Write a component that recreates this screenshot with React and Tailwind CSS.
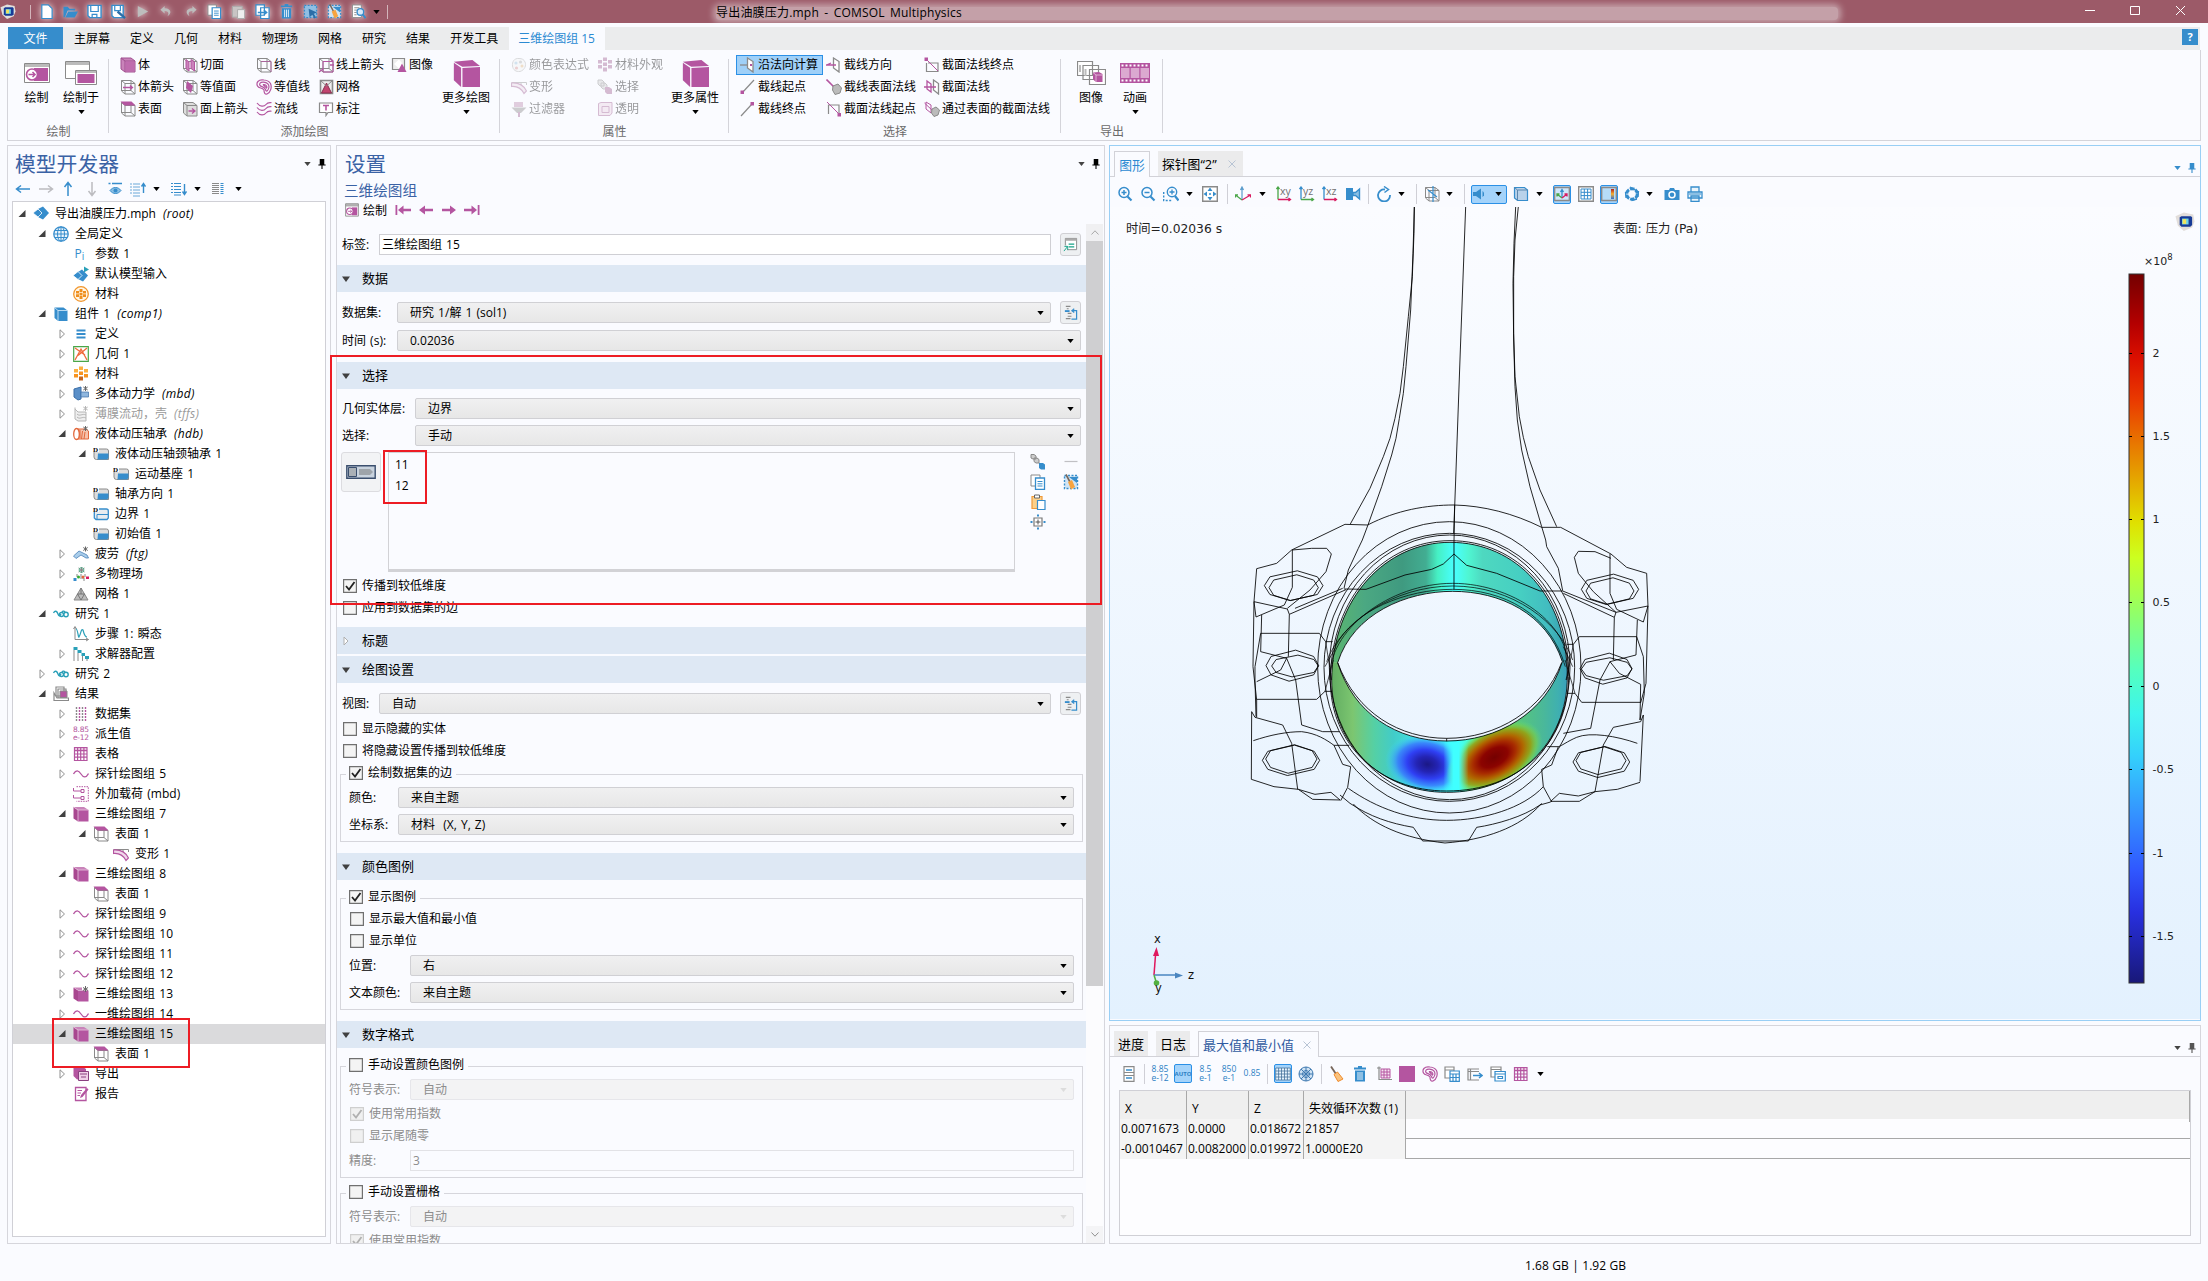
import React from "react";

const P = "#b455a0";
const B = "#368dcc";
const G = "#8a8a8a";
const T = "#2aa0b8";

const cubeFrame = (
  <g fill="none" stroke={G}>
    <path d="M1.5 1.5H11L15 4.5V15H5L1.5 12ZM1.5 1.5L5 4.5H15M5 4.5V15M11 1.5V11.5L15 15M11 11.5H1.5" />
  </g>
);

const ICONS = {
  cubeSolid: (
    <>
      <path d="M0.5 1H11L15.5 4H5Z" fill="#c983ba" />
      <path d="M0.5 1L5 4V15.5L0.5 12.5Z" fill="#a8478f" />
      <path d="M5 4H15.500V15.500H5Z" fill={P} />
      <path d="M0.500 1L5 4V15.500M5 4H15.500" fill="none" stroke="#e9c6e0" strokeWidth="0.8" />
    </>
  ),
  cubeStar: (
    <>
      <path d="M0.5 1.500L5 4.500V15.500L0.500 12.500Z" fill="#a8478f" />
      <path d="M5 4.500H15.500V15.500H5Z" fill={P} />
      <path d="M0.500 1.500H9V4H5Z" fill="#c983ba" />
      <path d="M12.500 0V6M10 1.500L15 4.500M15 1.500L10 4.500" stroke="#666" fill="none" />
    </>
  ),
  cubeBlue: (
    <>
      <path d="M1.500 1.500H10.500L14.500 4.500V15H5L1.500 12Z" fill={B} />
      <path d="M1.500 1.500L5 4.500H14.500M5 4.500V15" fill="none" stroke="#d8ecfa" strokeWidth="0.8" />
    </>
  ),
  cubeLight: (
    <>
      <path d="M1 1H11L15 4V15H5L1 12Z" fill="#c983ba" stroke="#a05090" />
      <path d="M1 1L5 4H15M5 4V15" fill="none" stroke="#a05090" />
      <path d="M5.500 4.500H14.500V14.500H5.500Z" fill="#bf6cae" />
    </>
  ),
  cubeBig: (
    <>
      <path d="M0.500 1L11.500 0L16 3.500L5.500 4Z" fill={P} />
      <path d="M0.500 1.600L4.800 4.600V16L0.500 12Z" fill={P} />
      <path d="M5.600 4.700L16 4.200V16H5.600Z" fill={P} />
    </>
  ),
  surface: (
    <>
      {cubeFrame}
      <path d="M0.500 0.500H11.500L15.500 4.500H4.500Z" fill={P} />
    </>
  ),
  volArrow: (
    <>
      {cubeFrame}
      <path d="M3 8.500H12M10 6.500L12.500 8.500L10 10.500" stroke={P} fill="none" strokeWidth="1.3" />
    </>
  ),
  slice: (
    <>
      {cubeFrame}
      <path d="M4 2.500L7 5V14L4 11.500ZM9 2.500L12.500 5V14L9 11.500Z" fill="#c983ba" stroke={P} />
    </>
  ),
  iso: (
    <>
      {cubeFrame}
      <path d="M5 2L11 7L9 14L4 9Z" fill={P} />
    </>
  ),
  surfArrow: (
    <>
      <path d="M1.500 1.500H11L15 4.500V15H5L1.500 12Z" fill="#ddd" stroke={G} />
      <path d="M1.500 1.500L5 4.500H15M5 4.500V15" fill="none" stroke={G} />
      <path d="M6.500 10H12M10 7.500L13 10L10 12.500" stroke={P} fill="none" strokeWidth="1.300" />
    </>
  ),
  lineCube: (
    <>
      {cubeFrame}
      <path d="M5 4.500H15V15" stroke={P} fill="none" strokeWidth="0.700" />
    </>
  ),
  contour: (
    <g fill="none" stroke={P} strokeWidth="1.200">
      <path d="M8 1C2 0 0 4 1.500 7C3 10 6 8 8 11C8 14 9 15.500 11 15C15 13 16 8 14.500 4.500C13 2 11 1.300 8 1Z" />
      <path d="M7.500 3.200C4 3 3 5 4 6.500C5.500 8 8 7.500 9.500 10.500C10.500 14 12.500 11 13 8C13 4.500 10.500 3.500 7.500 3.200Z" />
      <path d="M8 5.500C6 5.500 8.500 6.500 10.500 9C11.500 8 10.500 5.800 8 5.500Z" />
    </g>
  ),
  stream: (
    <g fill="none" stroke={P} strokeWidth="1.200">
      <path d="M1 2C4 6 8 6 10 3.500S14 2 15.500 1.500M1 6.500C4 10.500 8 10 10 7.500S14 6 15.500 5.500M1 11C4 15 8 14.500 10 12S14 10.500 15.500 10" />
    </g>
  ),
  lineArrow: (
    <>
      {cubeFrame}
      <path d="M5 4.500H15V15H5Z" stroke={P} fill="none" />
      <path d="M12 1L15.500 4.500M12 8H16M5 12L1 15" stroke={P} fill="none" strokeWidth="1.300" />
    </>
  ),
  meshTri: (
    <>
      <path d="M2.500 1.500H14.500V14.500H2.500Z" fill="#eee" stroke={G} strokeWidth="1.600" />
      <path d="M8.500 4L13.500 14H3.500Z" fill="#c2456f" stroke="#8a3050" />
      <path d="M2.500 1.500L8.500 7L14.500 1.500" fill="none" stroke={G} />
    </>
  ),
  note: (
    <>
      <path d="M1.500 2H14.500V11.500H10L8 14.500V11.500H1.500Z" fill="#fff" stroke={G} strokeWidth="1.200" />
      <path d="M5 4.500H11M8 4.500V9.500" stroke={P} strokeWidth="1.600" fill="none" />
    </>
  ),
  image: (
    <>
      <path d="M1.500 1.500H13.500V12.500H1.500Z" fill="#eee" stroke={G} strokeWidth="1.200" />
      <path d="M3 7L8 2.500L12.500 8L8 11.500Z" fill="#fff" />
      <path d="M11 6.500L15.500 15H6.500Z" fill={P} />
    </>
  ),
  palette: (
    <>
      <path d="M8 1.500C3 1 1 5 1.500 9C2 13 5 15 9 14.500C14 13 15.500 8 14 5C13 2.500 11 1.500 8 1.500Z" fill="#f2f2f2" stroke="#aaa" />
      <circle cx="5" cy="6" r="1.600" fill="#8bc4ea" />
      <circle cx="9.500" cy="5" r="1.600" fill="#aaa" />
      <circle cx="5.500" cy="11" r="1.600" fill="#e88" />
      <circle cx="11" cy="9" r="1.500" fill="#f2b25a" />
    </>
  ),
  deform: (
    <g fill="none" stroke={P}>
      <path d="M0.500 3.500H15.500V6M10 3.500V7" stroke={G} />
      <path d="M0.500 4V7.500C6 7 10 9 13 14.500L15.500 12C13 7 8 3.500 0.500 4Z" fill="#f0d6ea" strokeWidth="1.200" />
    </g>
  ),
  filter: (
    <>
      <path d="M3 1H12V6H3Z" fill="#c983ba" />
      <path d="M0.500 6.500H15.500L10 12H6Z" fill="#888" />
      <path d="M7 11H9V16H7Z" fill={P} />
    </>
  ),
  matGrid: (
    <g fill={P}>
      <path d="M6 0.500H10V4H6ZM1 3H5V6.500H1ZM11 3H15V6.500H11ZM6 5.500H10V9H6ZM1 8H5V11.500H1ZM11 8H15V11.500H11ZM6 10.500H10V14.500H6Z" />
    </g>
  ),
  cubes: (
    <>
      <path d="M1 1H5L7 3V7H3L1 5ZM4 4H8L10 6V10H6L4 8Z" fill="#ccc" stroke={G} />
      <path d="M8 8H12L15 10V15H10L8 13Z" fill={P} />
    </>
  ),
  cubesBlue: (
    <>
      <path d="M1 0.500H4L6 2V5H3L1 4ZM4 4H7L9 5.500V9H6L4 7.500Z" fill="#ccc" stroke={G} />
      <path d="M9 9H13L15 10.500V15.500H11L9 14Z" fill={B} />
    </>
  ),
  transp: (
    <>
      <path d="M1.500 2.500L4 1.500H15V12L13 14.500H1.500Z" fill="#f0d0e8" stroke={P} />
      <path d="M5 5.500H12V11.500H5Z" fill="none" stroke={P} />
    </>
  ),
  cutPlane: (
    <g fill="none" stroke={G} strokeWidth="1.300">
      <path d="M0 8H8" />
      <path d="M7.500 1L13 4.500V15L7.500 11Z" fill="#fff" />
      <path d="M10 8H12" stroke={P} strokeWidth="2" />
    </g>
  ),
  cutPlaneDir: (
    <g fill="none" stroke={G} strokeWidth="1.300">
      <path d="M7.500 1L13 4.500V15L7.500 11Z" fill="#fff" />
      <path d="M0 8H10M5 6L0.500 8" stroke={P} />
    </g>
  ),
  cutPlaneNorm: (
    <g fill="none" stroke={G} strokeWidth="1.300">
      <path d="M9.500 1L14.500 4.500V15L9.500 11Z" fill="#fff" />
      <path d="M3 2L7 5V13L3 10Z M0 8H12" stroke={P} />
    </g>
  ),
  lineStart: (
    <>
      <path d="M2 14L14 1" stroke={G} strokeWidth="1.200" />
      <path d="M0.500 11.500H4V15H0.500Z" fill={P} />
    </>
  ),
  lineEnd: (
    <>
      <path d="M1 15L12 3" stroke={G} strokeWidth="1.200" />
      <path d="M10.500 1H14V4.500H10.500Z" fill={P} />
    </>
  ),
  surfNormal: (
    <>
      <path d="M0.500 0.500L9 9" stroke={P} strokeWidth="1.600" />
      <path d="M7 7L12 5L15.500 9L14 14L9 15.500L6.500 11Z" fill="#bbb" stroke={G} />
    </>
  ),
  planeNormEnd: (
    <>
      <path d="M4 6H14V14.500H2.500V6" fill="none" stroke={G} strokeWidth="1.200" />
      <path d="M3 3L14 14" stroke={P} />
      <path d="M0.500 0.500H4V4H0.500Z" fill={P} />
    </>
  ),
  planeNormStart: (
    <>
      <path d="M2.500 13V4H13V12" fill="none" stroke={G} strokeWidth="1.200" />
      <path d="M1 1L13 13" stroke={P} />
      <path d="M11.500 12H15V15.500H11.500Z" fill={P} />
    </>
  ),
  planeSurf: (
    <>
      <path d="M2 1L7 4V12L2 8ZM0.500 2L10 11" fill="none" stroke={P} />
      <path d="M8 8L12 6L15.500 9L14 14L10 15.500L7.500 12Z" fill="#bbb" stroke={G} />
    </>
  ),
  plotWin: (
    <>
      <path d="M0.700 1H15.300V15H0.700Z" fill="#fff" stroke={G} strokeWidth="1" />
      <path d="M0.700 1H15.300V3.500H0.700Z" fill="#bbb" stroke={G} strokeWidth="0.600" />
      <path d="M8 5H14V14H8Z" fill={P} />
      <circle cx="5.500" cy="9.500" r="3.700" fill="#fff" stroke={P} strokeWidth="1.200" />
      <path d="M3.500 9.500H7.500M6 8L7.700 9.500L6 11" fill="none" stroke={P} strokeWidth="1" />
    </>
  ),
  root: (
    <>
      <path d="M5 3L10 0.500L16 7L10 13.500L5 11Z" fill={B} />
      <path d="M0 7L5 3L9 7L5 11Z" fill={B} stroke="#fff" strokeWidth="0.800" />
    </>
  ),
  modelIn: (
    <>
      <path d="M5 6L9 3.500L15 9.500L10 15.500L5 13Z" fill={B} />
      <path d="M0 9.500L5 5.500L9 9.500L5 13.500Z" fill={B} stroke="#fff" strokeWidth="0.800" />
      <path d="M11 0.500L16 3.500L11 6.500Z" fill={T} />
    </>
  ),
  globe: (
    <g fill="none" stroke={B}>
      <circle cx="8" cy="8" r="7.200" fill="#eaf4fb" strokeWidth="1.300" />
      <ellipse cx="8" cy="8" rx="3.500" ry="7.200" />
      <path d="M1 8H15M8 1V15M2 4.500H14M2 11.500H14" />
    </g>
  ),
  pi: (
    <text x="1.500" y="12" fontSize="12" fill={B} className="font-['Open_Sans']">
      P<tspan fontSize="10" dy="2">i</tspan>
    </text>
  ),
  matRing: (
    <>
      <circle cx="8" cy="8" r="7.300" fill="#fff6e6" stroke="#f2962c" strokeWidth="1.300" />
      <path d="M6.500 3H9.500V6H6.500ZM3 5H6V7.500H3ZM10 5H13V7.500H10ZM6.500 6.700H9.500V9.500H6.500ZM3 8.300H6V11H3ZM10 8.300H13V11H10ZM6.500 10H9.500V13H6.500Z" fill="#ef8f1e" />
    </>
  ),
  matColor: (
    <>
      <path d="M6 0.500H10V4H6ZM1 3H5V6.500H1ZM11 3H15V6.500H11Z" fill="#fbb040" />
      <path d="M6 5.500H10V9H6ZM1 8H5V11.500H1ZM11 8H15V11.500H11Z" fill="#f7931e" />
      <path d="M6 10.500H10V14.500H6Z" fill="#c8661a" />
    </>
  ),
  lines3: <path d="M3.500 4.500H12.500M3.500 8H12.500M3.500 11.500H12.500" stroke={B} strokeWidth="2" />,
  geom: (
    <>
      <path d="M0.700 0.700H15.300V15.300H0.700Z" fill="#fff" stroke="#4aa648" strokeWidth="1.200" />
      <path d="M2 2L12 9M2 14L8 3L14 14M14 2L5 9.500" fill="none" stroke="#f0693a" strokeWidth="1.300" />
    </>
  ),
  multibody: (
    <>
      <path d="M1 3L8 1V13L5 14L1 11Z" fill="#5a8fc8" stroke="#3c6fa8" />
      <path d="M8 6H15.500V11H8Z" fill="#8fb6de" stroke="#3c6fa8" strokeWidth="0.700" />
      <path d="M12.500 0V5M10.300 1L14.700 4M14.700 1L10.300 4" stroke="#666" fill="none" />
    </>
  ),
  thinFilm: (
    <g stroke="#b5b5b5" fill="none">
      <path d="M2 1.500V13L5 15H13V6H5L2 3" fill="#eee" />
      <path d="M4 8C7 11 9 7 13 9M4 11C7 14 9 10 13 12" />
      <path d="M12.500 0V5M10.300 1L14.700 4M14.700 1L10.300 4" />
    </g>
  ),
  bearing: (
    <>
      <path d="M3 3H13L15.500 5V13H3Z" fill="#f6c2ac" stroke="#e2683c" />
      <ellipse cx="3.500" cy="8" rx="2.800" ry="5.500" fill="#fff" stroke="#e2683c" strokeWidth="1.300" />
      <path d="M7 4V12M9.500 5L8.500 13M12 6L11 13" stroke="#e2683c" />
      <path d="M12.500 0V5M10.300 1L14.700 4M14.700 1L10.300 4" stroke="#666" fill="none" />
    </>
  ),
  domain: (
    <>
      <path d="M3.500 3H13.500Q15.500 3 15.500 5V13.500H3.500Q1 13.500 1 11V5Z" fill="#dcdcdc" stroke={G} />
      <path d="M5 7.500H15.500V12L14 13.500H4.500Z" fill={B} />
      <path d="M0 0H6V6H0Z" fill="#fff" />
      <text x="0" y="5.500" fontSize="7" fontWeight="bold" className="font-['Liberation_Serif']">D</text>
    </>
  ),
  boundary: (
    <>
      <path d="M3.500 3H13.500Q15.300 3 15.300 5V12L14 13.500H3L1.300 12V5Z" fill="#e8ecf0" stroke={B} strokeWidth="1.300" />
      <path d="M4 8.500H15M4 8.500V13" stroke={B} fill="none" />
      <path d="M0 0H6V6H0Z" fill="#fff" />
      <text x="0" y="5.500" fontSize="7" fontWeight="bold" className="font-['Liberation_Serif']">D</text>
    </>
  ),
  fatigue: (
    <>
      <path d="M0.500 10L6 5L14 9L15.500 12L13 12L8 9L3 12.500Z" fill="#a9cdea" stroke="#4a80b8" strokeWidth="0.800" />
      <path d="M12.500 0.500V5.500M10.300 1.500L14.700 4.500M14.700 1.500L10.300 4.500" stroke="#666" fill="none" />
    </>
  ),
  multiphys: (
    <>
      <path d="M8.500 1V7M5.500 2L11.500 6M11.500 2L5.500 6" stroke="#888" />
      <circle cx="8.500" cy="4" r="2.400" fill="none" stroke="#5a8" />
      <path d="M4 8V11M8 8V11M12 8V11M2 12V15M7 12H11V15" stroke="#888" fill="none" />
      <path d="M0.500 12H3.500V15H0.500Z" fill={B} />
      <circle cx="5.500" cy="11" r="1.500" fill="#3a3" />
      <circle cx="10" cy="11" r="1.500" fill="#e2683c" />
      <path d="M13 10.500H16V13H13Z" fill="#d81b60" />
    </>
  ),
  mesh: (
    <>
      <path d="M8 2L15 14H1Z" fill="#bbb" stroke={G} />
      <path d="M4.500 8H11.500L8 14ZM8 2V8" fill="none" stroke="#666" strokeWidth="0.800" />
    </>
  ),
  study: (
    <g fill="none" stroke={T} strokeWidth="1.400">
      <path d="M0.500 7C2 4 4 5 5 8S7 10 8 8" />
      <circle cx="8.500" cy="8.500" r="2" />
      <path d="M9 6C10 4.500 12 5 12 7" />
      <circle cx="13" cy="8.500" r="2.200" />
    </g>
  ),
  transient: (
    <>
      <path d="M2 1V13.500H15.500M0.500 3L2 0.500L3.500 3M13 12L15.500 13.500L13 15" fill="none" stroke={G} />
      <path d="M3 3C5 3 5 12 6 11C8 8 8 2 10 4C11 8 12 11 14 11" fill="none" stroke={T} strokeWidth="1.200" />
    </>
  ),
  solver: (
    <>
      <path d="M1 4V15M5 7V15M9.500 9V15M14 12V15" stroke={G} />
      <path d="M0.500 1H4.500V4H0.500ZM4.500 4H8.500V7H4.500ZM8.500 7H12V10H8.500ZM12 10H16V13H12Z" fill={T} />
    </>
  ),
  results: (
    <>
      <path d="M3 1H11V10H3ZM5 3H13V12H5Z" fill="#fff" stroke={G} strokeWidth="1.200" />
      <path d="M1 7V14.500H15.500V12H4Z" fill="#fff" stroke={G} strokeWidth="1.200" />
      <path d="M7 5H14V11.500H7Z" fill={P} stroke={G} />
    </>
  ),
  dataset: (
    <g strokeDasharray="2 1" strokeWidth="1.400" fill="none">
      <path d="M3.500 1V15M9.500 1V15" stroke={G} />
      <path d="M6.500 1V15M12.500 1V15" stroke={P} />
    </g>
  ),
  derived: (
    <g fill={P} fontSize="7.500" className="font-['DejaVu_Sans']">
      <text x="0" y="6" textLength="16">8.85</text>
      <text x="0" y="13.500" textLength="16">e-12</text>
    </g>
  ),
  table: (
    <>
      <path d="M1.500 1.500H14V5H1.500Z" fill="#e9c6e0" />
      <path d="M1.500 1.500H14V14.500H1.500ZM1.500 4.700H14M1.500 8H14M1.500 11.200H14M4.600 1.500V14.500M7.700 1.500V14.500M10.900 1.500V14.500" fill="none" stroke={P} strokeWidth="1.200" />
    </>
  ),
  wave: <path d="M0.500 8C3 3.500 5.500 4 8 8S13 12 15.500 7.500" fill="none" stroke={P} strokeWidth="1.300" />,
  appliedLoad: (
    <>
      <path d="M3.500 0.700H15.300V15.300H3.500" fill="none" stroke={P} strokeDasharray="1.500 1" />
      <path d="M0.500 2V5H8M0.500 9V12H8" fill="none" stroke={P} />
      <path d="M8 3.500H11V6.500H8ZM8 10.500H11V13.500H8Z" fill="#fff" stroke={P} />
    </>
  ),
  exportIc: (
    <>
      <path d="M0.500 1H10L13 3V12L4 13.500L0.500 10Z" fill={P} />
      <path d="M5.500 5.500H15.500V14.500H5.500Z" fill="#f0d0e8" stroke="#8a4080" />
      <path d="M7 8H14M8 11H13" stroke="#8a4080" />
    </>
  ),
  report: (
    <>
      <path d="M2.500 1.500H13V14.500H2.500Z" fill="#fff" stroke={P} strokeWidth="1.300" />
      <path d="M4.500 4.500H9M4.500 7H8M4.500 9.500H7" stroke={P} />
      <path d="M7 12L8 9L14 2L15.500 3.500L9.500 11Z" fill={P} />
    </>
  ),
  left: <path d="M15 8H2M6 4.500L1.500 8L6 11.500" fill="none" stroke={B} strokeWidth="1.500" />,
  rightGrey: <path d="M1 8H14M10 4.500L14.500 8L10 11.500" fill="none" stroke="#bcbcc0" strokeWidth="1.500" />,
  up: <path d="M8 15V2M4.500 6L8 1.500L11.500 6" fill="none" stroke={B} strokeWidth="1.500" />,
  downGrey: <path d="M8 1V14M4.500 10L8 14.500L11.500 10" fill="none" stroke="#bcbcc0" strokeWidth="1.500" />,
  eye: (
    <>
      <path d="M1.500 2.500H3.500M5 2.500H15" stroke={B} strokeWidth="1.600" />
      <path d="M3 9.500C6 5.500 11 5.500 14 9.500C11 13.500 6 13.500 3 9.500Z" fill="#8bbfe4" stroke={B} />
      <circle cx="8.500" cy="9.500" r="2" fill={B} />
    </>
  ),
  listUp: (
    <>
      <path d="M0 3H2M3 3H10M0 6H2M3 6H10M0 9H2M3 9H10M0 12H2M3 12H10M3 15H10" stroke="#6ba8d8" />
      <path d="M13.500 12V3M11.500 5.500L13.500 2.500L15.500 5.500" fill="none" stroke={B} strokeWidth="1.400" />
    </>
  ),
  listDown: (
    <>
      <path d="M0 2.500H2M3 2.500H10M0 5.500H2M3 5.500H10M0 8.500H2M3 8.500H10M0 11.500H2M3 11.500H10M3 14H10" stroke={B} />
      <path d="M13.500 3V13M11.500 10.500L13.500 13.500L15.500 10.500" fill="none" stroke={B} strokeWidth="1.400" />
    </>
  ),
  cols: (
    <>
      <path d="M2 2.500H9M2 4.500H9M2 6.500H9M2 8.500H9M2 10.500H9M2 12.500H9" stroke={G} />
      <path d="M10.500 2.500H13.500M10.500 4.500H13.500M10.500 6.500H13.500M10.500 8.500H13.500M10.500 10.500H13.500M10.500 12.500H13.500" stroke={B} />
    </>
  ),
  pFirst: (
    <>
      <path d="M0.500 3H2.300V13H0.500ZM7 6.800H16V9.200H7Z" fill={P} />
      <path d="M8.500 3.500L3 8L8.500 12.500Z" fill={P} />
    </>
  ),
  pPrev: <path d="M7 3.500L1 8L7 12.500V9.200H15V6.800H7Z" fill={P} />,
  pNext: <path d="M9 3.500L15 8L9 12.500V9.200H1V6.800H9Z" fill={P} />,
  pLast: <path d="M15.500 3H13.700V13H15.500ZM7.500 3.500L13 8L7.500 12.500V9.200H0V6.800H7.500Z" fill={P} />,
  rename: (
    <>
      <path d="M2.500 1.500H14.500V13.500H5M2.500 1.500V9" fill="#fff" stroke={G} />
      <path d="M2.500 1.500H14.500V4H2.500Z" fill="#aaa" />
      <path d="M6 7.500H12M6 10.500H12" stroke="#18a388" strokeWidth="1.400" />
      <path d="M5 10H1.500M5 10V14M5 10L1 15" stroke="#18a388" fill="none" />
    </>
  ),
  goTo: (
    <>
      <path d="M3 1.500H8M4 4H6M5 9H9M5 12H9M3 14.500H8" stroke={G} strokeWidth="1.300" />
      <path d="M2 6.500H7" stroke={B} strokeWidth="2" />
      <path d="M9 15H14.500V6H10M12 4L9.500 6L12 8" fill="none" stroke={B} strokeWidth="1.300" />
    </>
  ),
  file: <path d="M3 1H10L14 5V15.500H3Z" fill="#fff" stroke={B} strokeWidth="1.300" />,
  open: <path d="M0.500 3H5L7 5H13V7H5L2 14H0.500ZM5.500 8H16L12.500 14.500H2.500Z" fill={B} />,
  save: (
    <>
      <path d="M1 1.500H15V14.500H3L1 12.500Z" fill="#fff" stroke={B} strokeWidth="1.500" />
      <path d="M4 2V8H12V2M5.500 14V11H10.500V14" fill="none" stroke={B} strokeWidth="1.300" />
    </>
  ),
  saveAs: (
    <>
      <path d="M1 1.500H13V14.500H3L1 12.500Z" fill="#fff" stroke={B} strokeWidth="1.500" />
      <path d="M4 2V7H10V2" fill="none" stroke={B} strokeWidth="1.300" />
      <path d="M7 8L15 15" stroke="#2b6ea8" strokeWidth="2.500" />
    </>
  ),
  play: <path d="M3 2L14 8L3 14Z" fill="#bdbdbd" />,
  undo: <path d="M6 2L1.500 6L6 10V7.500C10 7.500 11 10 9 13C14 10 13 4.500 6 4.500Z" fill="#bdbdbd" />,
  redo: <path d="M10 2L14.500 6L10 10V7.500C6 7.500 5 10 7 13C2 10 3 4.500 10 4.500Z" fill="#bdbdbd" />,
  copy: (
    <>
      <path d="M1 1H10V12H1Z" fill="#fff" stroke={G} />
      <path d="M5.500 4H14.500V15.500H5.500Z" fill="#fff" stroke={B} strokeWidth="1.300" />
      <path d="M7.500 7.500H12.500M7.500 9.800H12.500M7.500 12H12.500" stroke={B} />
    </>
  ),
  pasteGrey: (
    <>
      <path d="M1.500 2.500H12V14H1.500Z" fill="#c8c4c4" stroke="#aaa" />
      <path d="M7 6H14.500V15.500H7Z" fill="#eee" stroke="#aaa" />
    </>
  ),
  paste: (
    <>
      <path d="M2 2.500H12V14.500H2Z" fill="#fbd08a" stroke="#ef9a3a" strokeWidth="1.200" />
      <path d="M4.500 1H9.500V4H4.500Z" fill="#fff" stroke="#666" />
      <path d="M7.500 6.500H15V15.500H7.500Z" fill="#fff" stroke={B} strokeWidth="1.200" />
    </>
  ),
  dup: (
    <>
      <path d="M1 1H10V12H1ZM6 4H15V15.500H6Z" fill="#fff" stroke={B} strokeWidth="1.300" />
      <path d="M3 9H12M9.500 6.500L12.500 9L9.500 11.500" fill="none" stroke={B} strokeWidth="1.500" />
    </>
  ),
  trash: (
    <>
      <path d="M2 2.500H14M6 1H10" stroke={B} strokeWidth="1.800" />
      <path d="M3 4.500H13V15.500H3Z" fill={B} />
      <path d="M6 6V14M8 6V14M10 6V14" stroke="#e6f2fb" />
    </>
  ),
  select: (
    <>
      <path d="M1.500 1.500H14.500V14.500H1.500Z" fill="#8fbfe4" stroke={B} strokeDasharray="2 1.500" strokeWidth="1.400" />
      <path d="M6 5L15 9L11.500 10.500L14 14.500L12 15.500L10 11.500L7 14Z" fill="#2b6ea8" />
    </>
  ),
  broomSel: (
    <>
      <path d="M1.500 1.500H14.500V14.500H1.500Z" fill="#cfe4f5" stroke={B} strokeDasharray="2 1.500" strokeWidth="1.400" />
      <path d="M6 3H14V9Z" fill={B} />
      <path d="M3 0.500L7 8" stroke="#77665a" strokeWidth="1.600" />
      <path d="M5 8L9 6L12 13L8 15.500Z" fill="#f7a440" />
    </>
  ),
  broom: (
    <>
      <path d="M2 0.500L7 8" stroke="#77665a" strokeWidth="1.800" />
      <path d="M5 8.500L8.500 6L14 13L9 15.500Z" fill="#f9c27e" stroke="#f08a2a" />
    </>
  ),
  search: (
    <>
      <path d="M1.500 1H11V14.500H1.500Z" fill="#fff" stroke={G} />
      <path d="M3.500 4H9M3.500 6.500H7M3.500 9H6M3.500 11.500H6" stroke={G} />
      <circle cx="10" cy="8.500" r="3.500" fill="#d6eafa" stroke={B} strokeWidth="1.400" />
      <path d="M12.500 11L15.500 15" stroke={B} strokeWidth="2" />
    </>
  ),
  comsol: (
    <>
      <path d="M0 3.500L7 0.500L15 2L16 8L14 13L7 16L2 11.500Z" fill="#e2dedb" />
      <path d="M3.500 4.500L5 3.500H13L14 4.500V11L12.500 12.500H5L3.500 11Z" fill="#173a96" />
      <path d="M5.500 5.500H11V10.500H5.500Z" fill="#6fd3e8" />
      <path d="M6 6H9V10H6Z" fill="#f2e35c" />
    </>
  ),
  zoomIn: (
    <g fill="none" stroke={B}>
      <circle cx="7" cy="6.500" r="5" strokeWidth="1.500" />
      <path d="M4.500 6.500H9.500M7 4V9" strokeWidth="1.500" />
      <path d="M10.500 10.500L14.500 14.500" strokeWidth="2.200" />
    </g>
  ),
  zoomOut: (
    <g fill="none" stroke={B}>
      <circle cx="7" cy="6.500" r="5" strokeWidth="1.500" />
      <path d="M4.500 6.500H9.500" strokeWidth="1.500" />
      <path d="M10.500 10.500L14.500 14.500" strokeWidth="2.200" />
    </g>
  ),
  zoomBox: (
    <g fill="none" stroke={B}>
      <path d="M0.700 6V14.500H9" strokeDasharray="2 1.500" strokeWidth="1.400" />
      <circle cx="9" cy="6" r="4.700" strokeWidth="1.400" />
      <path d="M6.500 6H11.500M9 3.500V8.500" strokeWidth="1.300" />
      <path d="M12 10L15.500 14.500" strokeWidth="2.200" />
    </g>
  ),
  fit: (
    <>
      <path d="M0.700 0.700H15.300V15.300H0.700Z" fill="#fff" stroke={G} strokeWidth="1.400" />
      <path d="M8 1.500L10.500 5H5.500ZM8 14.500L10.500 11H5.500ZM1.500 8L5 5.500V10.500ZM14.500 8L11 5.500V10.500Z" fill={B} />
      <path d="M7 8H9M8 7V9" stroke={B} />
    </>
  ),
  axes: (
    <g fill="none" strokeWidth="1.200">
      <path d="M7 14V1.500M5.500 4L7 1L8.500 4" stroke="#5a9ccc" />
      <path d="M7 14L0.500 9M0.500 11.500V8.800H3" stroke="#4aa648" />
      <path d="M7 14L15.500 9M12.500 8.800H15.500V11.500" stroke="#d81b60" />
    </g>
  ),
  xy: (
    <g fill="none" strokeWidth="1.300">
      <path d="M2 13.500V1M0.500 3L2 1L3.500 3" stroke="#4aa648" />
      <path d="M2 13.500H14.500M12.500 12L14.500 13.500L12.500 15" stroke="#d81b60" />
      <text x="4" y="9" fontSize="10.500" fill="#707070" stroke="none">xy</text>
    </g>
  ),
  yz: (
    <g fill="none" strokeWidth="1.300">
      <path d="M2 13.500V1M0.500 3L2 1L3.500 3" stroke={B} />
      <path d="M2 13.500H14.500M12.500 12L14.500 13.500L12.500 15" stroke="#4aa648" />
      <text x="4" y="9" fontSize="10.500" fill="#707070" stroke="none">yz</text>
    </g>
  ),
  xz: (
    <g fill="none" strokeWidth="1.300">
      <path d="M2 13.500V1M0.500 3L2 1L3.500 3" stroke={B} />
      <path d="M2 13.500H14.500M12.500 12L14.500 13.500L12.500 15" stroke="#d81b60" />
      <text x="4" y="9" fontSize="10.500" fill="#707070" stroke="none">xz</text>
    </g>
  ),
  mirror: (
    <>
      <path d="M1 2H8V14H1Z" fill={B} />
      <path d="M8 6.500H10.500L14.500 3V13L10.500 9.500H8Z" fill="#8bbfe4" stroke={B} strokeWidth="1.400" />
    </>
  ),
  rotate: (
    <g fill="none" stroke={B} strokeWidth="1.800">
      <path d="M14 9A6 6 0 1 1 9 3.500" />
      <path d="M8 0.500L12.500 3.500L8.500 6.500" strokeWidth="1.500" />
    </g>
  ),
  clip: (
    <>
      {cubeFrame}
      <path d="M9 0V16M4 4L13 11" stroke={B} fill="none" strokeWidth="1.200" />
    </>
  ),
  light: (
    <>
      <path d="M1 6H4L9 2.500V13.500L4 10H1Z" fill={B} />
      <path d="M10.500 5L12 6.500V9.500L10.500 11Z" fill={B} />
    </>
  ),
  cubeGlass: (
    <>
      <path d="M1.500 1.500H11.500L14.500 4V14.500H4.500L1.500 12Z" fill="#b9d2ea" stroke={B} strokeWidth="1.200" />
      <path d="M1.500 1.500L4.500 4H14.500M4.500 4V14.500" fill="none" stroke="#5d87ad" />
    </>
  ),
  axesBox: (
    <g fill="none" strokeWidth="1.300">
      <path d="M0.700 1.500H15.300V14.500H0.700Z" stroke={G} fill="#cfe6fa" />
      <path d="M8 12V4M6.500 6L8 3.500L9.500 6" stroke={B} />
      <path d="M8 12L3 8M3 10.500V8H5.500" stroke="#4aa648" />
      <path d="M8 12L13 8M13 10.500V8H10.500" stroke="#d81b60" />
    </g>
  ),
  gridBox: (
    <>
      <path d="M0.700 0.700H15.300V15.300H0.700Z" fill="#fff" stroke={G} strokeWidth="1.400" />
      <path d="M3 3H13V13H3ZM3 6.300H13M3 9.600H13M6.300 3V13M9.600 3V13" fill="none" stroke={B} />
    </>
  ),
  legendBox: (
    <>
      <defs>
        <linearGradient id="lgIcon" x1="0" y1="0" x2="0" y2="1">
          <stop offset="0" stopColor="#b02020" />
          <stop offset="0.500" stopColor="#f7b030" />
          <stop offset="1" stopColor="#3070d0" />
        </linearGradient>
      </defs>
      <path d="M0.700 1.500H15.300V14.500H0.700Z" fill="#b6dcf8" stroke={G} strokeWidth="1.400" />
      <path d="M10 3H13V13H10Z" fill="url(#lgIcon)" />
    </>
  ),
  iris: (
    <g fill="none" stroke={B}>
      <circle cx="8" cy="8" r="5.300" strokeWidth="3" strokeDasharray="4.500 1.050" />
      <path d="M6 1L11.500 4M14.500 5L14 11M13 13L7.500 14.500M2 12L1.500 6" strokeWidth="1.300" />
    </g>
  ),
  camera: (
    <>
      <path d="M0.500 4H5L6 2H10L11 4H15.500V14H0.500Z" fill={B} />
      <circle cx="8" cy="8.800" r="3" fill="none" stroke="#fff" strokeWidth="1.500" />
    </>
  ),
  printer: (
    <>
      <path d="M4 1H12V6H4ZM1 6H15V12H1ZM4 10H12V15.500H4Z" fill="#eaf4fb" stroke={B} strokeWidth="1.300" />
      <path d="M2 7H14V9H2Z" fill="#8bbfe4" />
    </>
  ),
  docLines: (
    <>
      <path d="M3 0.700H13V15.300H3Z" fill="#fff" stroke={G} strokeWidth="1.200" />
      <path d="M5 4H11M5 12H11" stroke={B} strokeWidth="1.300" />
      <path d="M3 6.500H13M3 9.500H13" stroke={G} />
    </>
  ),
  tableBlue: (
    <path d="M0.700 2H15.300V14H0.700ZM0.700 5H15.300M0.700 8H15.300M0.700 11H15.300M3.600 2V14M6.500 2V14M9.500 2V14M12.400 2V14" fill="#e6f3fd" stroke="#44719a" strokeWidth="0.800" />
  ),
  polar: (
    <g fill="#cfe2f3" stroke="#3d78b0">
      <circle cx="8" cy="8" r="7" />
      <circle cx="8" cy="8" r="3.500" />
      <path d="M1 8H15M8 1V15M3 3L13 13M13 3L3 13" />
    </g>
  ),
  tabPlot: (
    <>
      <path d="M3 0.500V13.500H16M1 2H5" fill="none" stroke={G} strokeWidth="1.200" />
      <path d="M5 3H14V12H5ZM5 6H14M5 9H14M8 3V12M11 3V12" fill="#f6e4f1" stroke={P} />
    </>
  ),
  square: <path d="M0 0H16V16H0Z" fill={P} />,
  calcCopy: (
    <>
      <path d="M1 1H10V12H1ZM1 4H10" fill="#fff" stroke={G} strokeWidth="1.200" />
      <path d="M6 5H15.300V15.300H6ZM6 8H15M9 8V15M12 8V15M6 11.500H15" fill="#fff" stroke={B} strokeWidth="1.200" />
    </>
  ),
  exportTab: (
    <>
      <path d="M12 3H1V14H12M1 5.500H12M3.500 3V14" fill="none" stroke={G} strokeWidth="1.200" />
      <path d="M6 9.500H14M12 7L15 9.500L12 12" fill="none" stroke={B} strokeWidth="1.500" />
    </>
  ),
  winCopy: (
    <>
      <path d="M1 1H11V11H1ZM1 3.500H11" fill="#fff" stroke={G} strokeWidth="1.200" />
      <path d="M5 5.500H15.300V15H5ZM5 8H15.300M8 10.500H12.500V12.500H8Z" fill="#fff" stroke={B} strokeWidth="1.200" />
    </>
  ),
  target: (
    <>
      <path d="M4 4H12V12H4Z" fill="#fff" stroke="#777" strokeWidth="1.200" />
      <path d="M8 5.500V10.500M5.500 8H10.500" stroke="#555" />
      <path d="M8 0.500V2.500M8 13.500V15.500M0.500 8H2.500M13.500 8H15.500" stroke={B} strokeWidth="2" />
    </>
  ),
  minus: <path d="M1.500 7.500H14.500" stroke="#c0c0c4" strokeWidth="1.200" />,
};

function Icon({ name, className = "size-4" }) {
  return (
    <svg viewBox="0 0 16 16" className={`shrink-0 ${className}`}>
      {ICONS[name]}
    </svg>
  );
}

function Caret({ className = "text-black" }) {
  return (
    <svg viewBox="0 0 8 5" className={`h-[4px] w-[7px] shrink-0 ${className}`}>
      <path d="M0 0H8L4 5Z" fill="currentColor" />
    </svg>
  );
}

function Pin({ className = "text-[#555]" }) {
  return (
    <svg viewBox="0 0 8 11" className={`h-[10px] w-[8px] shrink-0 ${className}`}>
      <path d="M1.500 0H6.500V6H8V7.200H4.600V11H3.400V7.200H0V6H1.500Z" fill="currentColor" />
    </svg>
  );
}

function TitleBar() {
  const tools = ["file", "open", "save", "saveAs", "play", "undo", "redo", "copy", "pasteGrey", "dup", "trash", "select", "broomSel", "search"];
  return (
    <header className="relative flex h-[23px] items-center overflow-hidden bg-[#9c5a68]">
      <Icon name="comsol" className="h-[15px] w-4" />
      <span className="ml-[14px] h-[14px] w-px bg-[#d3b5bb]" />
      <div className="ml-[3px] flex">
        {tools.map((t) => (
          <span key={t} className="flex w-6 justify-center drop-shadow-[0_0_3px_#ffffffcc]">
            <Icon name={t} className="size-[15px]" />
          </span>
        ))}
      </div>
      <Caret className="ml-[3px] text-black" />
      <span className="ml-[7px] h-[14px] w-px bg-[#d3b5bb]" />
      <div className="ml-[328px] mt-[3px] h-[13px] w-[1122px] whitespace-nowrap rounded bg-[#c4a0a8] text-[12px] leading-[12px] tracking-[0.2px] text-black shadow-[0_0_6px_3px_#c4a0a8] [word-spacing:2px]">
        导出油膜压力.mph - COMSOL Multiphysics
      </div>
      <svg viewBox="0 0 120 12" className="absolute right-4 top-[5px] h-[12px] w-[120px]" fill="none" stroke="#fff">
        <path d="M13 5.500H23M58.500 1.500H67.500V9.500H58.500ZM104 1L113 10M113 1L104 10" />
      </svg>
    </header>
  );
}

function RibbonTabs() {
  return (
    <nav className="mx-2 mt-1 flex h-[23px] bg-[#ebeced] leading-6">
      <span className="h-[22px] w-[55px] bg-[#368dcc] text-center text-white">文件</span>
      <span className="w-px" />
      {["主屏幕", "定义", "几何", "材料", "物理场", "网格", "研究", "结果", "开发工具"].map((t) => (
        <span key={t} className="px-[10px]">{t}</span>
      ))}
      <span className="ml-px w-[96px] bg-[#fafbff] pl-[9px] text-[#2b8ad2]">三维绘图组 15</span>
      <span className="ml-auto mr-[2px] mt-[2px] h-[16px] w-[16px] bg-[#368dcc] text-center text-[11px] font-bold leading-[16px] text-white">?</span>
    </nav>
  );
}

function RibbonItem({ icon, label, active, dim }) {
  return (
    <div className={`flex h-[22px] items-center gap-[2px] whitespace-nowrap ${dim ? "opacity-40 grayscale-[30%]" : ""}`}>
      {active ? (
        <span className="-ml-[4px] flex h-[20px] w-[87px] items-center gap-[2px] border border-[#2b90e6] bg-[#9fd0f8] pl-[3px]">
          <Icon name={icon} />
          {label}
        </span>
      ) : (
        <>
          <Icon name={icon} />
          {label}
        </>
      )}
    </div>
  );
}

function RibbonCol({ items, className, dim }) {
  return (
    <div className={`mt-[4px] ${className}`}>
      {items.map(([icon, label, active]) => (
        <RibbonItem key={label} icon={icon} label={label} active={active} dim={dim} />
      ))}
    </div>
  );
}

function BigButton({ children, label, caret, className }) {
  return (
    <div className={`flex flex-col items-center whitespace-nowrap ${className}`}>
      <div className="mt-[9px] flex h-[28px] items-center">{children}</div>
      <div className="h-[20px] leading-[22px]">{label}</div>
      {caret && <Caret className="mt-[3px]" />}
    </div>
  );
}

function RibbonGroup({ title, className, children }) {
  return (
    <section className={`relative h-[89px] ${className}`}>
      <div className="flex h-[73px]">{children}</div>
      <div className="text-center leading-[18px] text-[#6a6a6a]">{title}</div>
      <span className="absolute bottom-[6px] right-0 top-[9px] w-px bg-[#d4d4da]" />
    </section>
  );
}

function Ribbon() {
  return (
    <div className="mx-[7px] flex h-[91px] border border-t-0 border-[#d4d4da]">
      <RibbonGroup title="绘制" className="w-[101px]">
        <BigButton label="绘制" className="ml-[10px] w-[37px] shrink-0">
          <svg viewBox="0 0 26 20" className="h-[20px] w-[26px]">
            <path d="M0.500 0.500H25.500V19.500H0.500Z" fill="#fff" stroke={G} />
            <path d="M1 1H25V4H1Z" fill="#bbb" />
            <path d="M10 5H24V18H10Z" fill={P} />
            <circle cx="8" cy="11.500" r="5.500" fill="#fff" stroke={P} strokeWidth="1.600" />
            <path d="M4.500 11.500H11M8.500 9L11 11.500L8.500 14" fill="none" stroke={P} strokeWidth="1.500" />
          </svg>
        </BigButton>
        <BigButton label="绘制于" caret className="ml-[6px] w-[40px] shrink-0">
          <svg viewBox="0 0 32 24" className="h-[24px] w-[32px]">
            <path d="M0.500 0.500H24.500V17.500H0.500Z" fill="#fff" stroke={G} />
            <path d="M1 1H24V4H1Z" fill="#bbb" />
            <path d="M10.500 9.500H31.500V23.500H10.500Z" fill="#fff" stroke={G} />
            <path d="M11 10H31V12H11Z" fill="#bbb" />
            <path d="M12.500 13H29.500V22H12.500Z" fill={P} />
          </svg>
        </BigButton>
      </RibbonGroup>
      <RibbonGroup title="添加绘图" className="w-[391px]">
        <RibbonCol className="ml-[11px] w-[62px]" items={[["cubeLight", "体"], ["volArrow", "体箭头"], ["surface", "表面"]]} />
        <RibbonCol className="w-[74px]" items={[["slice", "切面"], ["iso", "等值面"], ["surfArrow", "面上箭头"]]} />
        <RibbonCol className="w-[62px]" items={[["lineCube", "线"], ["contour", "等值线"], ["stream", "流线"]]} />
        <RibbonCol className="w-[73px]" items={[["lineArrow", "线上箭头"], ["meshTri", "网格"], ["note", "标注"]]} />
        <RibbonCol className="w-[44px]" items={[["image", "图像"]]} />
        <BigButton label="更多绘图" caret className="ml-[4px] w-[54px]">
          <Icon name="cubeBig" className="size-[27px]" />
        </BigButton>
      </RibbonGroup>
      <RibbonGroup title="属性" className="w-[229px]">
        <RibbonCol dim className="ml-[11px] w-[86px]" items={[["palette", "颜色表达式"], ["deform", "变形"], ["filter", "过滤器"]]} />
        <RibbonCol dim className="w-[68px]" items={[["matGrid", "材料外观"], ["cubes", "选择"], ["transp", "透明"]]} />
        <BigButton label="更多属性" caret className="ml-[2px] w-[56px]">
          <Icon name="cubeBig" className="size-[27px]" />
        </BigButton>
      </RibbonGroup>
      <RibbonGroup title="选择" className="w-[332px]">
        <RibbonCol className="ml-[11px] w-[86px]" items={[["cutPlane", "沿法向计算", true], ["lineStart", "截线起点"], ["lineEnd", "截线终点"]]} />
        <RibbonCol className="w-[98px]" items={[["cutPlaneDir", "截线方向"], ["surfNormal", "截线表面法线"], ["planeNormStart", "截面法线起点"]]} />
        <RibbonCol className="w-[130px]" items={[["planeNormEnd", "截面法线终点"], ["cutPlaneNorm", "截面法线"], ["planeSurf", "通过表面的截面法线"]]} />
      </RibbonGroup>
      <RibbonGroup title="导出" className="w-[102px]">
        <BigButton label="图像" className="ml-[11px] w-[38px]">
          <svg viewBox="0 0 29 24" className="h-[24px] w-[29px]">
            <path d="M0.500 0.500H15.500V14.500H0.500ZM6 4.500H21.500V18.500H6ZM12.500 8.500H28.500V23.500H12.500Z" fill="#fff" stroke={G} strokeWidth="1.200" />
            <path d="M3 4V11M8.500 8V15" stroke="#bbb" strokeWidth="2" />
            <path d="M16 11.500L22 11L25.500 13V21H19L16 18.500Z" fill={P} />
            <path d="M16 11.500L19 14H25.500M19 14V21" fill="none" stroke="#e9c6e0" strokeWidth="0.800" />
          </svg>
        </BigButton>
        <BigButton label="动画" caret className="ml-[6px] w-[38px]">
          <svg viewBox="0 0 30 20" className="h-[20px] w-[30px]">
            <path d="M0 0H30V20H0Z" fill={P} />
            <path d="M1 5H9.500V15H1ZM10.700 5H19.300V15H10.700ZM20.500 5H29V15H20.500Z" fill="#dba9d0" />
            <path d="M1.500 2.500H29M1.500 17.500H29" stroke="#fff" strokeWidth="2" strokeDasharray="2 2" />
          </svg>
        </BigButton>
      </RibbonGroup>
    </div>
  );
}

const TREE = [
  [0, "o", "root", "导出油膜压力.mph", "(root)"],
  [1, "o", "globe", "全局定义"],
  [2, "", "pi", "参数 1"],
  [2, "", "modelIn", "默认模型输入"],
  [2, "", "matRing", "材料"],
  [1, "o", "cubeBlue", "组件 1", "(comp1)"],
  [2, "c", "lines3", "定义"],
  [2, "c", "geom", "几何 1"],
  [2, "c", "matColor", "材料"],
  [2, "c", "multibody", "多体动力学", "(mbd)"],
  [2, "c", "thinFilm", "薄膜流动，壳", "(tffs)", "dim"],
  [2, "o", "bearing", "液体动压轴承", "(hdb)"],
  [3, "o", "domain", "液体动压轴颈轴承 1"],
  [4, "", "domain", "运动基座 1"],
  [3, "", "domain", "轴承方向 1"],
  [3, "", "boundary", "边界 1"],
  [3, "", "domain", "初始值 1"],
  [2, "c", "fatigue", "疲劳", "(ftg)"],
  [2, "c", "multiphys", "多物理场"],
  [2, "c", "mesh", "网格 1"],
  [1, "o", "study", "研究 1"],
  [2, "", "transient", "步骤 1: 瞬态"],
  [2, "c", "solver", "求解器配置"],
  [1, "c", "study", "研究 2"],
  [1, "o", "results", "结果"],
  [2, "c", "dataset", "数据集"],
  [2, "c", "derived", "派生值"],
  [2, "c", "table", "表格"],
  [2, "c", "wave", "探针绘图组 5"],
  [2, "", "appliedLoad", "外加载荷 (mbd)"],
  [2, "o", "cubeSolid", "三维绘图组 7"],
  [3, "o", "surface", "表面 1"],
  [4, "", "deform", "变形 1"],
  [2, "o", "cubeSolid", "三维绘图组 8"],
  [3, "", "surface", "表面 1"],
  [2, "c", "wave", "探针绘图组 9"],
  [2, "c", "wave", "探针绘图组 10"],
  [2, "c", "wave", "探针绘图组 11"],
  [2, "c", "wave", "探针绘图组 12"],
  [2, "c", "cubeStar", "三维绘图组 13"],
  [2, "c", "wave", "一维绘图组 14"],
  [2, "o", "cubeSolid", "三维绘图组 15", "", "sel"],
  [3, "", "surface", "表面 1"],
  [2, "c", "exportIc", "导出"],
  [2, "", "report", "报告"],
];

const INDENT = ["pl-[5px]", "pl-[25px]", "pl-[45px]", "pl-[65px]", "pl-[85px]"];

function TreeRow({ level, state, icon, label, tag, mode }) {
  return (
    <div className={`flex h-5 items-center whitespace-nowrap ${INDENT[level]} ${mode === "sel" ? "bg-[#dadadc]" : ""} ${mode === "dim" ? "text-[#9a9a9a]" : ""}`}>
      <svg viewBox="0 0 8 10" className="h-[10px] w-[8px] shrink-0">
        {state === "o" && <path d="M7.500 1V8H0.500Z" fill="#404040" />}
        {state === "c" && <path d="M2 0.800L6.500 5L2 9.200Z" fill="#fff" stroke="#909090" />}
      </svg>
      <Icon name={icon} className="ml-[7px] size-4" />
      <span className="ml-[6px]">{label}</span>
      {tag && <i className="ml-[7px] tracking-[0.3px]">{tag}</i>}
    </div>
  );
}

function ModelBuilder() {
  return (
    <aside className="h-[1099px] w-[324px] border border-[#d6d6dc]">
      <div className="flex h-[33px] items-center pl-[7px] pr-[4px] pt-[3px]">
        <h2 className="text-[20.8px] leading-[28px] text-[#3a62a5]">模型开发器</h2>
        <Caret className="ml-auto text-[#444]" />
        <Pin className="ml-[7px]" />
      </div>
      <div className="ml-[4px] flex h-[20px] items-center *:flex *:justify-center">
        <span className="w-[22px]"><Icon name="left" /></span>
        <span className="w-[24px]"><Icon name="rightGrey" /></span>
        <span className="w-[20px]"><Icon name="up" /></span>
        <span className="w-[27px]"><Icon name="downGrey" /></span>
        <span className="w-[19px]"><Icon name="eye" /></span>
        <span className="w-[28px]"><Icon name="listUp" /></span>
        <span className="w-[9px]"><Caret /></span>
        <span className="w-[35px]"><Icon name="listDown" /></span>
        <span className="w-[2px]"><Caret /></span>
        <span className="w-[40px]"><Icon name="cols" /></span>
        <span className="w-0"><Caret /></span>
      </div>
      <div className="ml-[4px] mt-[2px] h-[1036px] w-[314px] border border-[#d0d0d6] bg-white pt-[2px] [word-spacing:1.2px]">
        {TREE.map((r, i) => (
          <TreeRow key={i} level={r[0]} state={r[1]} icon={r[2]} label={r[3]} tag={r[4]} mode={r[5]} />
        ))}
      </div>
    </aside>
  );
}

function Header({ title, closed, className }) {
  return (
    <div className={`flex h-[27px] items-center bg-[#dee8f4] pl-[5px] ${className}`}>
      <svg viewBox="0 0 8 10" className="h-[10px] w-[8px]">
        {closed ? <path d="M2 1L6 5L2 9Z" fill="#fff" stroke="#b0b0b0" /> : <path d="M0 2.500H8L4 8Z" fill="#404040" />}
      </svg>
      <span className="ml-[12px] text-[13px] leading-[25px]">{title}</span>
    </div>
  );
}

function Check({ on, label, dim, className }) {
  return (
    <div className={`flex h-[22px] items-center gap-[5px] ${dim ? "text-[#8c8c8c]" : ""} ${className}`}>
      <svg viewBox="0 0 14 14" className="size-[14px] shrink-0">
        <path d="M0.600 0.600H13.400V13.400H0.600Z" fill={dim ? "#f0f0f0" : "#f4f4f4"} stroke={dim ? "#cfcfcf" : "#707070"} strokeWidth="1.200" />
        {on && <path d="M3 7L6 10.500L11.500 3" fill="none" stroke={dim ? "#b0b0b0" : "#222"} strokeWidth="1.800" />}
      </svg>
      <span className="leading-[20px]">{label}</span>
    </div>
  );
}

function Field({ label, labelW, value, kind = "select", dim, button, className }) {
  return (
    <div className={`flex h-[21px] items-center ${dim ? "text-[#8c8c8c]" : ""} ${className}`}>
      <span className={`shrink-0 whitespace-nowrap leading-[20px] ${labelW}`}>{label}</span>
      {kind === "select" ? (
        <span className={`flex h-[21px] flex-1 items-center justify-between rounded-[2px] border pl-[12px] pr-[6px] ${dim ? "border-[#e6e6ea] bg-[#f3f3f4]" : "border-[#d0d0d4] bg-gradient-to-b from-[#f0f0f1] to-[#e7e7e7]"}`}>
          <span className="whitespace-pre">{value}</span>
          <Caret className={dim ? "text-[#dcdcdc]" : "text-black"} />
        </span>
      ) : (
        <span className={`flex h-[21px] flex-1 items-center border pl-[2px] ${dim ? "border-[#e2e2e6]" : "border-[#cfcfd4] bg-white"}`}>{value}</span>
      )}
      {button && (
        <span className="ml-[9px] flex h-[23px] w-[21px] items-center justify-center rounded-[3px] border border-[#d0d0d4] bg-[#eef0f2]">
          <Icon name={button} className="size-[15px]" />
        </span>
      )}
    </div>
  );
}

function Group({ legend, on, className, children }) {
  return (
    <div className={`mx-[3px] border border-[#d6d6dc] pl-[8px] pr-[8px] ${className}`}>
      <div className="-ml-[3px] -mt-[13px] flex">
        <Check on={on} label={legend} className="bg-[#fafbff] pl-[3px] pr-[4px]" />
      </div>
      {children}
    </div>
  );
}

function SelectionList() {
  return (
    <div className="mt-[6px] flex h-[121px] pl-[4px]">
      <div className="flex h-[40px] w-[40px] items-center justify-center rounded-[3px] border border-[#dcdce0] bg-[#f2f3f5]">
        <svg viewBox="0 0 30 14" className="h-[14px] w-[30px]">
          <path d="M0.800 0.800H29.200V13.200H0.800Z" fill="#c9d3de" stroke="#3b4f6e" strokeWidth="1.400" />
          <path d="M2.500 2.500H10.500V11.500H2.500Z" fill="#aab0b6" stroke="#3b4f6e" />
          <path d="M13 4H24L27 7L24 10H13Z" fill="#9ea4aa" />
        </svg>
      </div>
      <div className="ml-[7px] h-[120px] w-[627px] border border-b-[3px] border-[#d2d2d6] pl-[6px] pt-px leading-[21px]">
        <div>11</div>
        <div>12</div>
      </div>
      <div className="ml-[15px] flex w-4 flex-col gap-[4px] pt-[2px]">
        <Icon name="cubesBlue" />
        <Icon name="copy" />
        <Icon name="paste" />
        <Icon name="target" />
      </div>
      <div className="ml-[17px] flex w-4 flex-col gap-[4px] pt-[2px]">
        <Icon name="minus" />
        <Icon name="broomSel" />
      </div>
    </div>
  );
}

function Settings() {
  return (
    <section className="flex h-[1099px] w-[769px] flex-col border border-[#d6d6dc]">
      <div className="flex h-[33px] shrink-0 items-center pl-[8px] pr-[4px] pt-[3px]">
        <h2 className="text-[20.500px] leading-[28px] text-[#3a62a5]">设置</h2>
        <Caret className="ml-auto text-[#444]" />
        <Pin className="ml-[7px]" />
      </div>
      <h3 className="shrink-0 pl-[7px] text-[14.600px] leading-[22px] text-[#3a62a5]">三维绘图组</h3>
      <div className="flex h-[18px] shrink-0 items-center pl-[7px]">
        <Icon name="plotWin" className="h-[14px] w-4" />
        <span className="ml-[3px] pt-px">绘制</span>
        <Icon name="pFirst" className="ml-[8px] size-4" />
        <Icon name="pPrev" className="ml-[7px] size-4" />
        <Icon name="pNext" className="ml-[7px] size-4" />
        <Icon name="pLast" className="ml-[7px] size-4" />
      </div>
      <div className="mt-[5px] flex min-h-0 flex-1 overflow-hidden">
        <div className="w-[749px] shrink-0 [word-spacing:1px]">
          <Field kind="input" className="mt-[10px] pl-[5px] pr-[5px]" label="标签:" labelW="w-[37px]" value="三维绘图组 15" button="rename" />
          <Header className="mt-[10px]" title="数据" />
          <Field className="mt-[10px] pl-[5px] pr-[5px]" label="数据集:" labelW="w-[55px]" value="研究 1/解 1 (sol1)" button="goTo" />
          <Field className="mt-[7px] pl-[5px] pr-[5px]" label="时间 (s):" labelW="w-[55px]" value="0.02036" />
          <Header className="mt-[11px]" title="选择" />
          <Field className="mt-[9px] pl-[5px] pr-[5px]" label="几何实体层:" labelW="w-[73px]" value="边界" />
          <Field className="mt-[6px] pl-[5px] pr-[5px]" label="选择:" labelW="w-[73px]" value="手动" />
          <SelectionList />
          <Check on label="传播到较低维度" className="mt-[2px] pl-[6px]" />
          <Check label="应用到数据集的边" className="pl-[6px]" />
          <Header closed className="mt-[8px]" title="标题" />
          <Header className="mt-[2px]" title="绘图设置" />
          <Field className="mt-[10px] pl-[5px] pr-[5px]" label="视图:" labelW="w-[37px]" value="自动" button="goTo" />
          <Check label="显示隐藏的实体" className="mt-[4px] pl-[6px]" />
          <Check label="将隐藏设置传播到较低维度" className="pl-[6px]" />
          <Group on legend="绘制数据集的边" className="mt-[12px] h-[68px]">
            <Field className="mt-[3px]" label="颜色:" labelW="w-[49px]" value="来自主题" />
            <Field className="mt-[6px]" label="坐标系:" labelW="w-[49px]" value="材料  (X, Y, Z)" />
          </Group>
          <Header className="mt-[11px]" title="颜色图例" />
          <Group on legend="显示图例" className="mt-[18px] h-[112px]">
            <Check label="显示最大值和最小值" className="pl-px" />
            <Check label="显示单位" className="pl-px" />
            <Field className="mt-[3px]" label="位置:" labelW="w-[61px]" value="右" />
            <Field className="mt-[6px]" label="文本颜色:" labelW="w-[61px]" value="来自主题" />
          </Group>
          <Header className="mt-[11px]" title="数字格式" />
          <Group legend="手动设置颜色图例" className="mt-[18px] h-[112px]">
            <Field dim className="mt-[3px]" label="符号表示:" labelW="w-[61px]" value="自动" />
            <Check dim on label="使用常用指数" className="mt-[3px] pl-px" />
            <Check dim label="显示尾随零" className="pl-px" />
            <Field dim kind="input" className="mt-[3px]" label="精度:" labelW="w-[61px]" value="3" />
          </Group>
          <Group legend="手动设置栅格" className="mt-[15px] h-[112px]">
            <Field dim className="mt-[3px]" label="符号表示:" labelW="w-[61px]" value="自动" />
            <Check dim on label="使用常用指数" className="mt-[3px] pl-px" />
          </Group>
        </div>
        <div className="flex w-[17px] flex-col bg-[#fcfcfe]">
          <span className="flex h-[17px] items-center justify-center bg-[#f0f0f2]">
            <svg viewBox="0 0 8 5" className="h-[5px] w-[8px]"><path d="M0.500 4.500L4 0.800L7.500 4.500" fill="none" stroke="#a8a8a8" /></svg>
          </span>
          <span className="h-[745px] bg-[#cfcfd1]" />
          <span className="mt-auto flex h-[17px] items-center justify-center bg-[#f4f4f6]">
            <svg viewBox="0 0 8 5" className="h-[5px] w-[8px]"><path d="M0.500 0.500L4 4.200L7.500 0.500" fill="none" stroke="#909090" /></svg>
          </span>
        </div>
      </div>
    </section>
  );
}

function Slot({ w, icon, caret, sep }) {
  return (
    <span className={`flex h-5 shrink-0 items-center justify-center ${w}`}>
      {icon && <Icon name={icon} />}
      {caret && <Caret />}
      {sep && <span className="h-[20px] w-px shrink-0 bg-[#cfcfd6]" />}
    </span>
  );
}

function HiSlot({ w, children }) {
  return (
    <span className={`flex shrink-0 justify-center ${w}`}>
      <span className="flex h-[19px] w-[18px] shrink-0 items-center justify-center rounded-[2px] border border-[#2b90e6] bg-[#a4d3fa]">{children}</span>
    </span>
  );
}

const octagon = (cx, cy, rx, ry) =>
  [0, 0.1, 0.27, 0.4, 0.5, 0.6, 0.77, 0.9]
    .map((t) => `${(cx + rx * Math.cos(2 * Math.PI * t)).toFixed(1)},${(cy + ry * Math.sin(2 * Math.PI * t)).toFixed(1)}`)
    .join(" ");

const HOLES = [
  [191, 317, 88, 45], [191, 323, 74, 39],
  [187, 557, 79, 47], [195, 558, 70, 33],
  [183, 841, 86, 46], [184, 837, 77, 43],
  [1140, 328, 86, 46], [1140, 333, 72, 40],
  [1128, 566, 78, 47], [1130, 567, 76, 34],
  [1114, 846, 85, 47], [1113, 842, 75, 42],
];

const OPENING = "M323 548C370 400 530 334 668 334C810 334 950 400 997 545C950 700 800 783 650 783C500 783 370 700 323 548Z";

function ConnectingRod() {
  return (
    <g>
      <defs>
        <linearGradient id="bandTop" gradientUnits="userSpaceOnUse" x1="305" y1="0" x2="1012" y2="0">
          <stop offset="0" stopColor="#5cb56f" />
          <stop offset="0.140" stopColor="#4ba882" />
          <stop offset="0.300" stopColor="#3f9a80" />
          <stop offset="0.400" stopColor="#42ad92" />
          <stop offset="0.450" stopColor="#46f0c4" />
          <stop offset="0.520" stopColor="#48ffff" />
          <stop offset="0.580" stopColor="#4ff6d2" />
          <stop offset="0.640" stopColor="#4ed8c0" />
          <stop offset="0.800" stopColor="#46cfc2" />
          <stop offset="0.920" stopColor="#42bcc0" />
          <stop offset="1" stopColor="#3598aa" />
        </linearGradient>
        <linearGradient id="bandBottom" gradientUnits="userSpaceOnUse" x1="305" y1="0" x2="1012" y2="0">
          <stop offset="0" stopColor="#62ad62" />
          <stop offset="0.090" stopColor="#7cc670" />
          <stop offset="0.180" stopColor="#55d0a4" />
          <stop offset="0.260" stopColor="#42ccc8" />
          <stop offset="0.500" stopColor="#40ffff" />
          <stop offset="0.550" stopColor="#40ffff" />
          <stop offset="0.620" stopColor="#4cffb0" />
          <stop offset="0.780" stopColor="#58c878" />
          <stop offset="0.900" stopColor="#4ab89a" />
          <stop offset="0.960" stopColor="#3fb0b0" />
          <stop offset="1" stopColor="#3aa0bc" />
        </linearGradient>
        <radialGradient id="lowBlob">
          <stop offset="0" stopColor="#1b1885" />
          <stop offset="0.250" stopColor="#2424b4" />
          <stop offset="0.480" stopColor="#2f40f4" />
          <stop offset="0.700" stopColor="#3878ff" stopOpacity="0.850" />
          <stop offset="1" stopColor="#3fe0ff" stopOpacity="0" />
        </radialGradient>
        <radialGradient id="highBlob">
          <stop offset="0" stopColor="#740000" />
          <stop offset="0.280" stopColor="#8c0400" />
          <stop offset="0.440" stopColor="#a82c00" />
          <stop offset="0.600" stopColor="#b06800" />
          <stop offset="0.760" stopColor="#98a010" stopOpacity="0.900" />
          <stop offset="0.880" stopColor="#80d040" stopOpacity="0.550" />
          <stop offset="1" stopColor="#60e080" stopOpacity="0" />
        </radialGradient>
        <linearGradient id="zeroStrip">
          <stop offset="0" stopColor="#40ffff" stopOpacity="0" />
          <stop offset="0.400" stopColor="#40ffff" />
          <stop offset="0.600" stopColor="#40ffff" />
          <stop offset="1" stopColor="#58ffc0" stopOpacity="0" />
        </linearGradient>
        <clipPath id="bore">
          <path clipRule="evenodd" d={`M660 187C860 187 1012 350 1012 590C1012 790 860 937 650 937C450 937 305 790 305 600C308 350 470 187 660 187Z ${OPENING}`} />
        </clipPath>
      </defs>
      <g clipPath="url(#bore)">
        <rect x="300" y="180" width="720" height="368" fill="url(#bandTop)" />
        <rect x="300" y="547" width="720" height="400" fill="url(#bandBottom)" />
        <ellipse cx="592" cy="853" rx="128" ry="90" fill="url(#lowBlob)" transform="rotate(12 592 853)" />
        <ellipse cx="793" cy="832" rx="158" ry="90" fill="url(#highBlob)" transform="rotate(-30 793 832)" />
        <rect x="640" y="770" width="76" height="180" fill="url(#zeroStrip)" />
      </g>
      <g fill="none" stroke="#000" strokeOpacity="0.850" strokeWidth="3" strokeLinejoin="round">
        <path d="M397 180L385 205L355 270L342 325M947 180L950 200L985 265L998 332" />
        <path d="M674 75L672 187V328" />
        <path d="M345 133L413 135C500 90 590 75 672 75C760 77 850 100 935 142H992" />
        <path d="M345 133L185 210L140 250L80 266L72 365L78 411L163 375L187 322V210L245 205H290L304 222L288 275L240 330L172 385" />
        <path d="M72 365L172 387L178 403M338 325L195 385M348 329L178 403" />
        <path d="M342 327L408 328L525 285L605 268L640 252L672 222L710 256L800 280L930 333L998 333L1158 397M1000 340L1153 412" />
        <path d="M95 405L92 515L170 535L152 570L80 605M92 460H268L287 485H308M178 403L175 530M72 365L69 560L80 660V712M92 460L75 560V600L78 710" />
        <path d="M170 535L197 600L215 735L278 755H328M80 658H260L285 634H307" />
        <path d="M64 898L65 695L75 712L158 735L185 790L203 928M70 782C120 765 170 755 215 755C260 760 290 780 312 796H358" />
        <path d="M64 898L132 920L205 928L248 958L330 960L303 937L255 943L205 928M312 796L338 853L362 860L353 922L332 962" />
        <path d="M992 142L1143 222L1190 262L1250 280L1254 378L1240 426L1160 388L1140 340V222M1143 235L1095 215L1045 214L1033 232L1045 280L1090 335L1158 397L1254 378" />
        <path d="M1158 397L1153 412L1150 540M1222 420L1218 525L1140 545L1168 580L1232 613M1220 470H1048L1030 493H1010M1220 470L1240 530L1243 640L1230 720M1254 378L1248 610L1232 668" />
        <path d="M1140 545L1110 600L1082 745L1000 760M1232 667H1055L1035 640H1010M1232 613L1230 720" />
        <path d="M1230 905L1240 705L1232 725L1150 742L1120 795L1095 935M1222 790C1160 768 1080 755 1040 772C1010 785 995 798 985 800H952" />
        <path d="M1230 907L1162 928L1095 935L1048 964H962L988 940L1045 948L1095 935M985 800L965 855L935 868L940 920L965 966" />
        <ellipse cx="658" cy="562" rx="395" ry="437" />
        <ellipse cx="658" cy="562" rx="376" ry="402" />
        <ellipse cx="659" cy="562" rx="361" ry="397" />
        <path d="M660 187C860 187 1012 350 1012 590C1012 790 860 937 650 937C450 937 305 790 305 600C308 350 470 187 660 187Z" />
        <path d="M660 182C864 182 1018 348 1016 590C1014 794 864 933 650 933C448 933 301 794 301 600C304 346 466 182 660 182Z" />
        <path d={OPENING} />
        <path d="M316 500C370 390 530 328 668 328C820 328 960 400 1006 560M290 545C330 430 490 318 668 318C850 318 990 430 1028 540M300 600C290 450 480 310 668 310C860 310 1050 450 1008 600" strokeOpacity="0.700" />
        <path d="M323 548C380 700 510 775 650 775C800 775 940 690 995 548M650 775V784" />
        <path d="M287 485L305 600M285 560L318 500M310 540L285 634M1030 493L1010 600M1028 560L1000 500M1005 540L1035 640" strokeOpacity="0.700" />
        <path d="M355 925C440 985 540 1021 650 1021C760 1021 880 985 940 920" />
        <path d="M330 945L360 970C420 1010 480 1030 550 1042L578 1083H715L740 1042C800 1033 880 1010 930 975L962 966" />
        <path d="M370 972C430 1035 520 1075 645 1089C760 1080 870 1045 935 970" />
        {HOLES.map(([cx, cy, rx, ry], i) => (
          <polygon key={i} points={octagon(cx, cy, rx, ry)} />
        ))}
      </g>
    </g>
  );
}

const TICKS = [["2", 353], ["1.5", 436], ["1", 519], ["0.5", 602], ["0", 686], ["-0.5", 769], ["-1", 853], ["-1.5", 936]];

function Canvas() {
  return (
    <svg viewBox="1110 207 1090 812" className="block h-[812px] w-[1090px] font-['DejaVu_Sans','Noto_Sans_CJK_SC',sans-serif]">
      <defs>
        <linearGradient id="sky" x1="0" y1="0" x2="0" y2="1">
          <stop offset="0" stopColor="#fbfcff" />
          <stop offset="1" stopColor="#e3f1fe" />
        </linearGradient>
        <linearGradient id="rainbow" x1="0" y1="0" x2="0" y2="1">
          <stop offset="0" stopColor="#740000" />
          <stop offset="0.070" stopColor="#b40000" />
          <stop offset="0.120" stopColor="#dc1000" />
          <stop offset="0.180" stopColor="#ea3c00" />
          <stop offset="0.240" stopColor="#e87800" />
          <stop offset="0.300" stopColor="#e4b000" />
          <stop offset="0.350" stopColor="#e0e000" />
          <stop offset="0.400" stopColor="#ccff20" />
          <stop offset="0.470" stopColor="#98ff60" />
          <stop offset="0.560" stopColor="#54ffc0" />
          <stop offset="0.620" stopColor="#3cf4ec" />
          <stop offset="0.680" stopColor="#34d0fc" />
          <stop offset="0.760" stopColor="#3494ff" />
          <stop offset="0.840" stopColor="#3058ff" />
          <stop offset="0.900" stopColor="#2830e0" />
          <stop offset="1" stopColor="#181878" />
        </linearGradient>
      </defs>
      <rect x="1110" y="207" width="1090" height="812" fill="url(#sky)" />
      <g transform="translate(1320 200) scale(0.33333)" fill="none" stroke="#000" strokeOpacity="0.850" strokeWidth="3" strokeLinejoin="round">
        <path d="M283 20L282 100L277 230L265 350L250 500L240 580L225 655L210 715L190 770L150 865L91 972" />
        <path d="M283 20L279 160L272 330L258 500L250 580L238 655L228 715L215 765L185 860L145 972L127 1020" />
        <path d="M437 20L421 450L407 840L401 1000" />
        <path d="M587 20L582 130L579 250L581 420L585 560L592 660L605 750L630 860L665 980L677 1020" />
        <path d="M595 20L585 120L581 230L581 400L585 530L598 650L610 712L625 770L660 870L710 980" />
      </g>
      <g transform="translate(1230 480) scale(0.33333)">
        <ConnectingRod />
      </g>
      <g fontSize="12.300" fill="#222">
        <text x="1126" y="232.500">时间=0.02036 s</text>
        <text x="1613" y="232.500">表面: 压力 (Pa)</text>
      </g>
      <svg x="2175" y="212" width="20" height="19" viewBox="0 0 16 16">{ICONS.comsol}</svg>
      <rect x="2129" y="274" width="15" height="709" fill="url(#rainbow)" stroke="#333" />
      <g fontSize="11" fill="#222">
        <text x="2144" y="264.500">×10<tspan fontSize="8.500" dy="-5">8</tspan></text>
        {TICKS.map(([t, y]) => (
          <g key={t}>
            <path d={`M2129 ${y}.5h3M2141 ${y}.5h3`} stroke="#000" />
            <text x="2152.500" y={y + 4}>{t}</text>
          </g>
        ))}
      </g>
      <g strokeWidth="1.500">
        <path d="M1154 975L1155.500 955" stroke="#e0185e" />
        <path d="M1156.500 947L1159 956H1153Z" fill="#e0185e" />
        <path d="M1154 975H1177" stroke="#4a86c0" />
        <path d="M1183 975.500L1175 972.500V978.500Z" fill="#4a86c0" />
        <path d="M1154 975L1156.500 983" stroke="#52b040" />
        <circle cx="1156.500" cy="983" r="2.800" fill="#52b040" />
      </g>
      <g fontSize="11.500" fill="#111">
        <text x="1154" y="943">x</text>
        <text x="1188" y="979">z</text>
        <text x="1155" y="992">y</text>
      </g>
    </svg>
  );
}

function GraphicsPanel() {
  return (
    <section className="h-[876px] w-[1092px] border border-[#99cff5]">
      <div className="flex h-[31px] items-end border-b border-[#d2d2d8] pl-[4px] pr-[4px] text-[12.800px]">
        <span className="-mb-px h-[26px] w-[36px] border border-b-0 border-[#d2d2d8] bg-[#fafbff] text-center leading-[26px] text-[#2b8ad2]">图形</span>
        <span className="ml-[8px] flex h-[25px] w-[85px] items-center bg-[#ebebec] pl-[4px]">
          探针图“2”
          <svg viewBox="0 0 8 8" className="ml-auto mr-[7px] size-[8px]"><path d="M0.500 0.500L7.500 7.500M7.500 0.500L0.500 7.500" stroke="#b8c4d4" /></svg>
        </span>
        <span className="mb-[3px] ml-auto flex items-center gap-[7px]">
          <Caret className="text-[#368dcc]" />
          <Pin className="text-[#368dcc]" />
        </span>
      </div>
      <div className="flex h-[30px] items-center pb-px pl-[3px] pt-[5px]">
        <Slot w="w-[23px]" icon="zoomIn" />
        <Slot w="w-[23px]" icon="zoomOut" />
        <Slot w="w-[23px]" icon="zoomBox" />
        <Slot w="w-[14px]" caret />
        <Slot w="w-[28px]" icon="fit" />
        <Slot w="w-[7px]" sep />
        <Slot w="w-[23px]" icon="axes" />
        <Slot w="w-[16px]" caret />
        <Slot w="w-[27px]" icon="xy" />
        <Slot w="w-[20px]" icon="yz" />
        <Slot w="w-[25px]" icon="xz" />
        <Slot w="w-[21px]" icon="mirror" />
        <Slot w="w-[11px]" sep />
        <Slot w="w-[20px]" icon="rotate" />
        <Slot w="w-[14px]" caret />
        <Slot w="w-[17px]" sep />
        <Slot w="w-[13px]" icon="clip" />
        <Slot w="w-[22px]" caret />
        <Slot w="w-[8px]" sep />
        <span className="ml-[3px] flex h-[19px] w-[36px] shrink-0 items-center justify-between rounded-[2px] border border-[#2b90e6] bg-[#a4d3fa] pr-[4px]">
          <Icon name="light" />
          <Caret />
        </span>
        <Slot w="w-[28px]" icon="cubeGlass" />
        <Slot w="w-[9px]" caret />
        <HiSlot w="w-[36px]"><Icon name="axesBox" /></HiSlot>
        <Slot w="w-[11px]" icon="gridBox" />
        <HiSlot w="w-[36px]"><Icon name="legendBox" /></HiSlot>
        <Slot w="w-[9px]" icon="iris" />
        <Slot w="w-[27px]" caret />
        <Slot w="w-[18px]" icon="camera" />
        <Slot w="w-[28px]" icon="printer" />
      </div>
      <Canvas />
    </section>
  );
}

function TwoLine({ w, a, b }) {
  return (
    <span className={`flex shrink-0 flex-col items-center whitespace-nowrap text-[8.500px] leading-[8.500px] text-[#2b80c4] ${w}`}>
      <span>{a}</span>
      {b && <span>{b}</span>}
    </span>
  );
}

function TablePanel() {
  const rows = [
    ["0.0071673", "0.0000", "0.018672", "21857"],
    ["-0.0010467", "0.0082000", "0.019972", "1.0000E20"],
  ];
  return (
    <section className="mt-[4px] h-[219px] w-[1092px] border border-[#d6d6dc]">
      <div className="flex h-[31px] items-end border-b border-[#d2d2d8] pl-[4px] pr-[4px] text-[13px]">
        <span className="h-[25px] w-[34px] bg-[#ebebec] text-center leading-[26px]">进度</span>
        <span className="ml-[8px] h-[25px] w-[34px] bg-[#ebebec] text-center leading-[26px]">日志</span>
        <span className="-mb-px ml-[8px] flex h-[26px] w-[121px] items-center border border-b-0 border-[#d2d2d8] bg-[#fafbff] pl-[4px] text-[#2f5aa0]">
          最大值和最小值
          <svg viewBox="0 0 8 8" className="ml-auto mr-[7px] size-[8px]"><path d="M0.500 0.500L7.500 7.500M7.500 0.500L0.500 7.500" stroke="#b8c4d4" /></svg>
        </span>
        <span className="mb-[3px] ml-auto flex items-center gap-[7px]">
          <Caret className="text-[#444]" />
          <Pin />
        </span>
      </div>
      <div className="flex h-[33px] items-center pl-[11px]">
        <Slot w="w-[16px]" icon="docLines" />
        <Slot w="w-[14px]" sep />
        <TwoLine w="w-[18px]" a="8.85" b="e-12" />
        <HiSlot w="w-[28px]"><span className="text-[6px] font-bold text-[#2b80c4]">AUTO</span></HiSlot>
        <TwoLine w="w-[17px]" a="8.5" b="e-1" />
        <TwoLine w="w-[30px]" a="850" b="e-1" />
        <TwoLine w="w-[16px]" a="0.85" />
        <Slot w="w-[15px]" sep />
        <HiSlot w="w-[16px]"><Icon name="tableBlue" /></HiSlot>
        <Slot w="w-[30px]" icon="polar" />
        <Slot w="w-px" sep />
        <Slot w="w-[30px]" icon="broom" />
        <Slot w="w-[16px]" icon="trash" />
        <Slot w="w-[31px]" icon="tabPlot" />
        <Slot w="w-[16px]" icon="square" />
        <Slot w="w-[29px]" icon="contour" />
        <Slot w="w-[16px]" icon="calcCopy" />
        <Slot w="w-[30px]" icon="exportTab" />
        <Slot w="w-[16px]" icon="winCopy" />
        <Slot w="w-[29px]" icon="table" />
        <Slot w="w-[11px]" caret />
      </div>
      <div className="ml-[9px] h-[146px] w-[1072px] border border-[#d0d0d6] bg-[#fdfdff]">
        <div className="grid h-[28px] grid-cols-[67px_62px_55px_102px_1fr] bg-[#efefef] *:border-r *:border-[#a8a8a8] *:pl-[5px] *:pt-[5px] *:leading-[26px]">
          <span>X</span>
          <span>Y</span>
          <span>Z</span>
          <span className="whitespace-nowrap">失效循环次数 (1)</span>
          <span className="border-r-0" />
        </div>
        {rows.map((r) => (
          <div key={r[0]} className="grid h-[20px] grid-cols-[67px_62px_55px_102px_1fr] border-b border-[#a8a8a8]">
            {r.map((c) => (
              <span key={c} className="whitespace-nowrap border-r border-[#a8a8a8] bg-[#f4f4f4] pl-px leading-[20px]">{c}</span>
            ))}
          </div>
        ))}
      </div>
    </section>
  );
}

export default function App() {
  return (
    <div className="relative h-[1281px] w-[2208px] overflow-hidden bg-[#fafbff] font-['Open_Sans','Noto_Sans_CJK_SC',sans-serif] text-[12px] leading-[18px] text-black">
      <TitleBar />
      <RibbonTabs />
      <Ribbon />
      <main className="ml-[7px] mt-[4px] flex">
        <ModelBuilder />
        <div className="ml-[5px]">
          <Settings />
        </div>
        <div className="ml-[4px]">
          <GraphicsPanel />
          <TablePanel />
        </div>
      </main>
      <footer className="ml-[1525px] mt-[13px] text-[12px] [word-spacing:0.4px]">1.68 GB | 1.92 GB</footer>
      <div className="absolute left-[330px] top-[355px] h-[250px] w-[772px] border-2 border-[#ed1c24]" />
      <div className="absolute left-[383px] top-[450px] h-[54px] w-[44px] border-2 border-[#ed1c24]" />
      <div className="absolute left-[52px] top-[1018px] h-[50px] w-[138px] border-2 border-[#ed1c24]" />
    </div>
  );
}
